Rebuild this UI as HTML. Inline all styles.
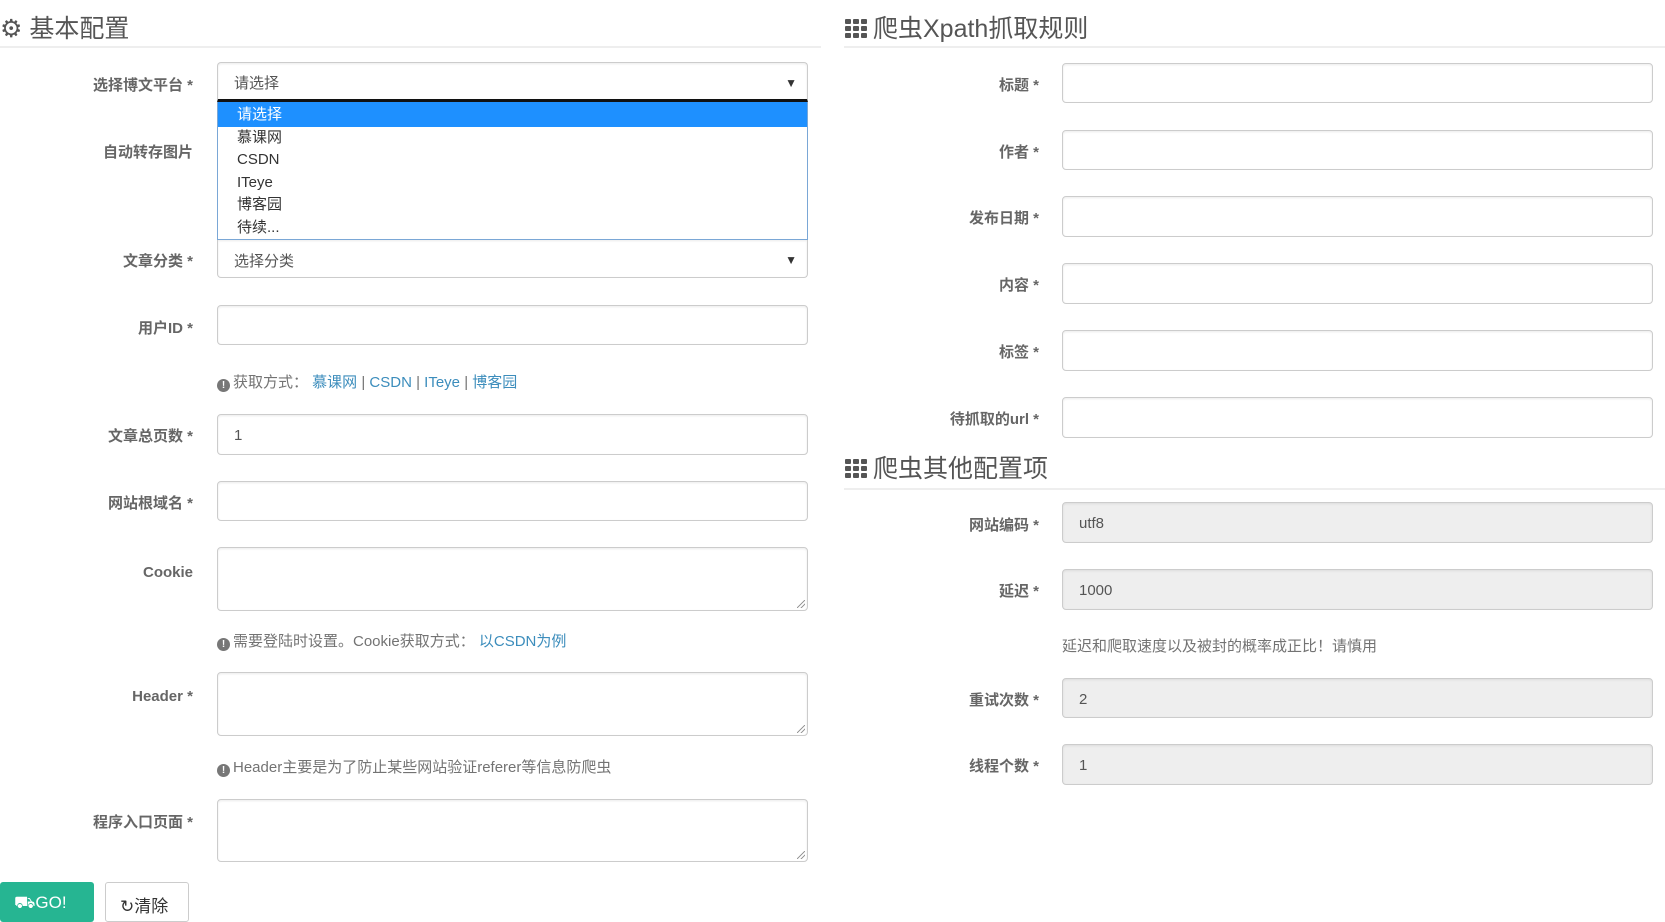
<!DOCTYPE html>
<html><head><meta charset="utf-8">
<style>
*{box-sizing:border-box;margin:0;padding:0}
body{width:1665px;height:911px;overflow:hidden;background:#fff;font-family:"Liberation Sans","Noto Sans CJK SC",sans-serif;color:#555;position:relative}
.a{position:absolute}
.h{font-size:25px;color:#555;line-height:30px}
.line{height:2px;background:#eee}
.lbl{font-size:15px;font-weight:bold;color:#666;text-align:right;line-height:20px;margin-top:2px}
.in{border:1px solid #ccc;border-radius:4px;box-shadow:inset 0 1px 2px rgba(0,0,0,.08);font-size:15px;color:#555;padding-left:16px;display:flex;align-items:center;background:#fff}
.ro{background:#eee}
.help{font-size:15px;color:#737373;line-height:20px;margin-top:2px}
.help a{color:#3c8dbc;text-decoration:none}
.ic{display:inline-block;width:13px;height:13px;border-radius:50%;background:#777;color:#fff;font-size:10px;font-weight:bold;text-align:center;line-height:13px;vertical-align:-1px;margin-right:3px}
.arr{position:absolute;right:10px;font-size:12px;color:#333}
.grid{display:inline-block;width:25px;height:19px;vertical-align:-1px;margin-right:3px;background:linear-gradient(#555,#555) 0 0/6px 5px;background:repeating-linear-gradient(90deg,transparent 0 0,transparent 0) ;position:relative}
.grid i{position:absolute;width:6px;height:5px;background:#555;border-radius:1px}
.rz{position:absolute;right:2px;bottom:2px;width:8px;height:8px;background:linear-gradient(135deg,transparent 45%,#999 46%,#999 54%,transparent 55%,transparent 70%,#999 71%,#999 79%,transparent 80%)}
</style></head><body>

<div class="a h" style="left:0;top:14px">⚙ 基本配置</div>
<div class="a line" style="left:0;top:46px;width:821px"></div>

<div class="a lbl" style="left:0;width:193px;top:74px">选择博文平台 *</div>
<div class="a in" style="left:217px;top:62px;width:591px;height:40px;border-bottom:3px solid #111;border-radius:4px 4px 0 0;padding-top:3px">请选择<span class="arr">▼</span></div>
<div class="a" style="left:217px;top:102px;width:591px;height:138px;border:1px solid #7aa7d6;border-top:none;background:#fff;font-size:15px;color:#333;line-height:22.5px">
 <div style="background:#1e90ff;color:#fff;padding-left:19px;padding-top:2px">请选择</div>
 <div style="padding-left:19px">慕课网</div>
 <div style="padding-left:19px">CSDN</div>
 <div style="padding-left:19px">ITeye</div>
 <div style="padding-left:19px">博客园</div>
 <div style="padding-left:19px">待续...</div>
</div>
<div class="a lbl" style="left:0;width:193px;top:141px">自动转存图片</div>

<div class="a lbl" style="left:0;width:193px;top:250px">文章分类 *</div>
<div class="a in" style="left:217px;top:240px;width:591px;height:38px;border-top:none;border-radius:0 0 4px 4px;padding-top:3px">选择分类<span class="arr">▼</span></div>

<div class="a lbl" style="left:0;width:193px;top:317px">用户ID *</div>
<div class="a in" style="left:217px;top:305px;width:591px;height:40px"></div>
<div class="a help" style="left:217px;top:371px"><span class="ic">!</span>获取方式： <a>慕课网</a> | <a>CSDN</a> | <a>ITeye</a> | <a>博客园</a></div>

<div class="a lbl" style="left:0;width:193px;top:425px">文章总页数 *</div>
<div class="a in" style="left:217px;top:414px;width:591px;height:41px;padding-top:2px">1</div>

<div class="a lbl" style="left:0;width:193px;top:492px">网站根域名 *</div>
<div class="a in" style="left:217px;top:481px;width:591px;height:40px"></div>

<div class="a lbl" style="left:0;width:193px;top:561px">Cookie</div>
<div class="a in" style="left:217px;top:547px;width:591px;height:64px"><span class="rz"></span></div>
<div class="a help" style="left:217px;top:630px"><span class="ic">!</span>需要登陆时设置。Cookie获取方式： <a>以CSDN为例</a></div>

<div class="a lbl" style="left:0;width:193px;top:685px">Header *</div>
<div class="a in" style="left:217px;top:672px;width:591px;height:64px"><span class="rz"></span></div>
<div class="a help" style="left:217px;top:756px"><span class="ic">!</span>Header主要是为了防止某些网站验证referer等信息防爬虫</div>

<div class="a lbl" style="left:0;width:193px;top:811px">程序入口页面 *</div>
<div class="a in" style="left:217px;top:799px;width:591px;height:63px"><span class="rz"></span></div>

<div class="a" style="left:0;top:882px;width:94px;height:40px;background:#26b592;border-radius:3px;color:#fff;font-size:17px;padding:11px 0 0 14px">⛟GO!</div>
<div class="a" style="left:105px;top:882px;width:84px;height:40px;border:1px solid #ccc;border-radius:3px;background:#fff;color:#333;font-size:17px;padding:9px 0 0 14px">↻清除</div>

<div class="a h" style="left:845px;top:14px"><span class="grid"><i style="left:0;top:0"></i><i style="left:8px;top:0"></i><i style="left:16px;top:0"></i><i style="left:0;top:7px"></i><i style="left:8px;top:7px"></i><i style="left:16px;top:7px"></i><i style="left:0;top:14px"></i><i style="left:8px;top:14px"></i><i style="left:16px;top:14px"></i></span>爬虫Xpath抓取规则</div>
<div class="a line" style="left:844px;top:46px;width:821px"></div>

<div class="a lbl" style="left:844px;width:195px;top:74px">标题 *</div>
<div class="a in" style="left:1062px;top:63px;width:591px;height:40px"></div>
<div class="a lbl" style="left:844px;width:195px;top:141px">作者 *</div>
<div class="a in" style="left:1062px;top:130px;width:591px;height:40px"></div>
<div class="a lbl" style="left:844px;width:195px;top:207px">发布日期 *</div>
<div class="a in" style="left:1062px;top:196px;width:591px;height:41px"></div>
<div class="a lbl" style="left:844px;width:195px;top:274px">内容 *</div>
<div class="a in" style="left:1062px;top:263px;width:591px;height:41px"></div>
<div class="a lbl" style="left:844px;width:195px;top:341px">标签 *</div>
<div class="a in" style="left:1062px;top:330px;width:591px;height:41px"></div>
<div class="a lbl" style="left:844px;width:195px;top:408px">待抓取的url *</div>
<div class="a in" style="left:1062px;top:397px;width:591px;height:41px"></div>

<div class="a h" style="left:845px;top:454px"><span class="grid"><i style="left:0;top:0"></i><i style="left:8px;top:0"></i><i style="left:16px;top:0"></i><i style="left:0;top:7px"></i><i style="left:8px;top:7px"></i><i style="left:16px;top:7px"></i><i style="left:0;top:14px"></i><i style="left:8px;top:14px"></i><i style="left:16px;top:14px"></i></span>爬虫其他配置项</div>
<div class="a line" style="left:844px;top:488px;width:821px"></div>

<div class="a lbl" style="left:844px;width:195px;top:514px">网站编码 *</div>
<div class="a in ro" style="left:1062px;top:502px;width:591px;height:41px;padding-top:2px">utf8</div>
<div class="a lbl" style="left:844px;width:195px;top:580px">延迟 *</div>
<div class="a in ro" style="left:1062px;top:569px;width:591px;height:41px;padding-top:2px">1000</div>
<div class="a help" style="left:1062px;top:635px">延迟和爬取速度以及被封的概率成正比！请慎用</div>
<div class="a lbl" style="left:844px;width:195px;top:689px">重试次数 *</div>
<div class="a in ro" style="left:1062px;top:678px;width:591px;height:40px;padding-top:2px">2</div>
<div class="a lbl" style="left:844px;width:195px;top:755px">线程个数 *</div>
<div class="a in ro" style="left:1062px;top:744px;width:591px;height:41px;padding-top:2px">1</div>

</body></html>
